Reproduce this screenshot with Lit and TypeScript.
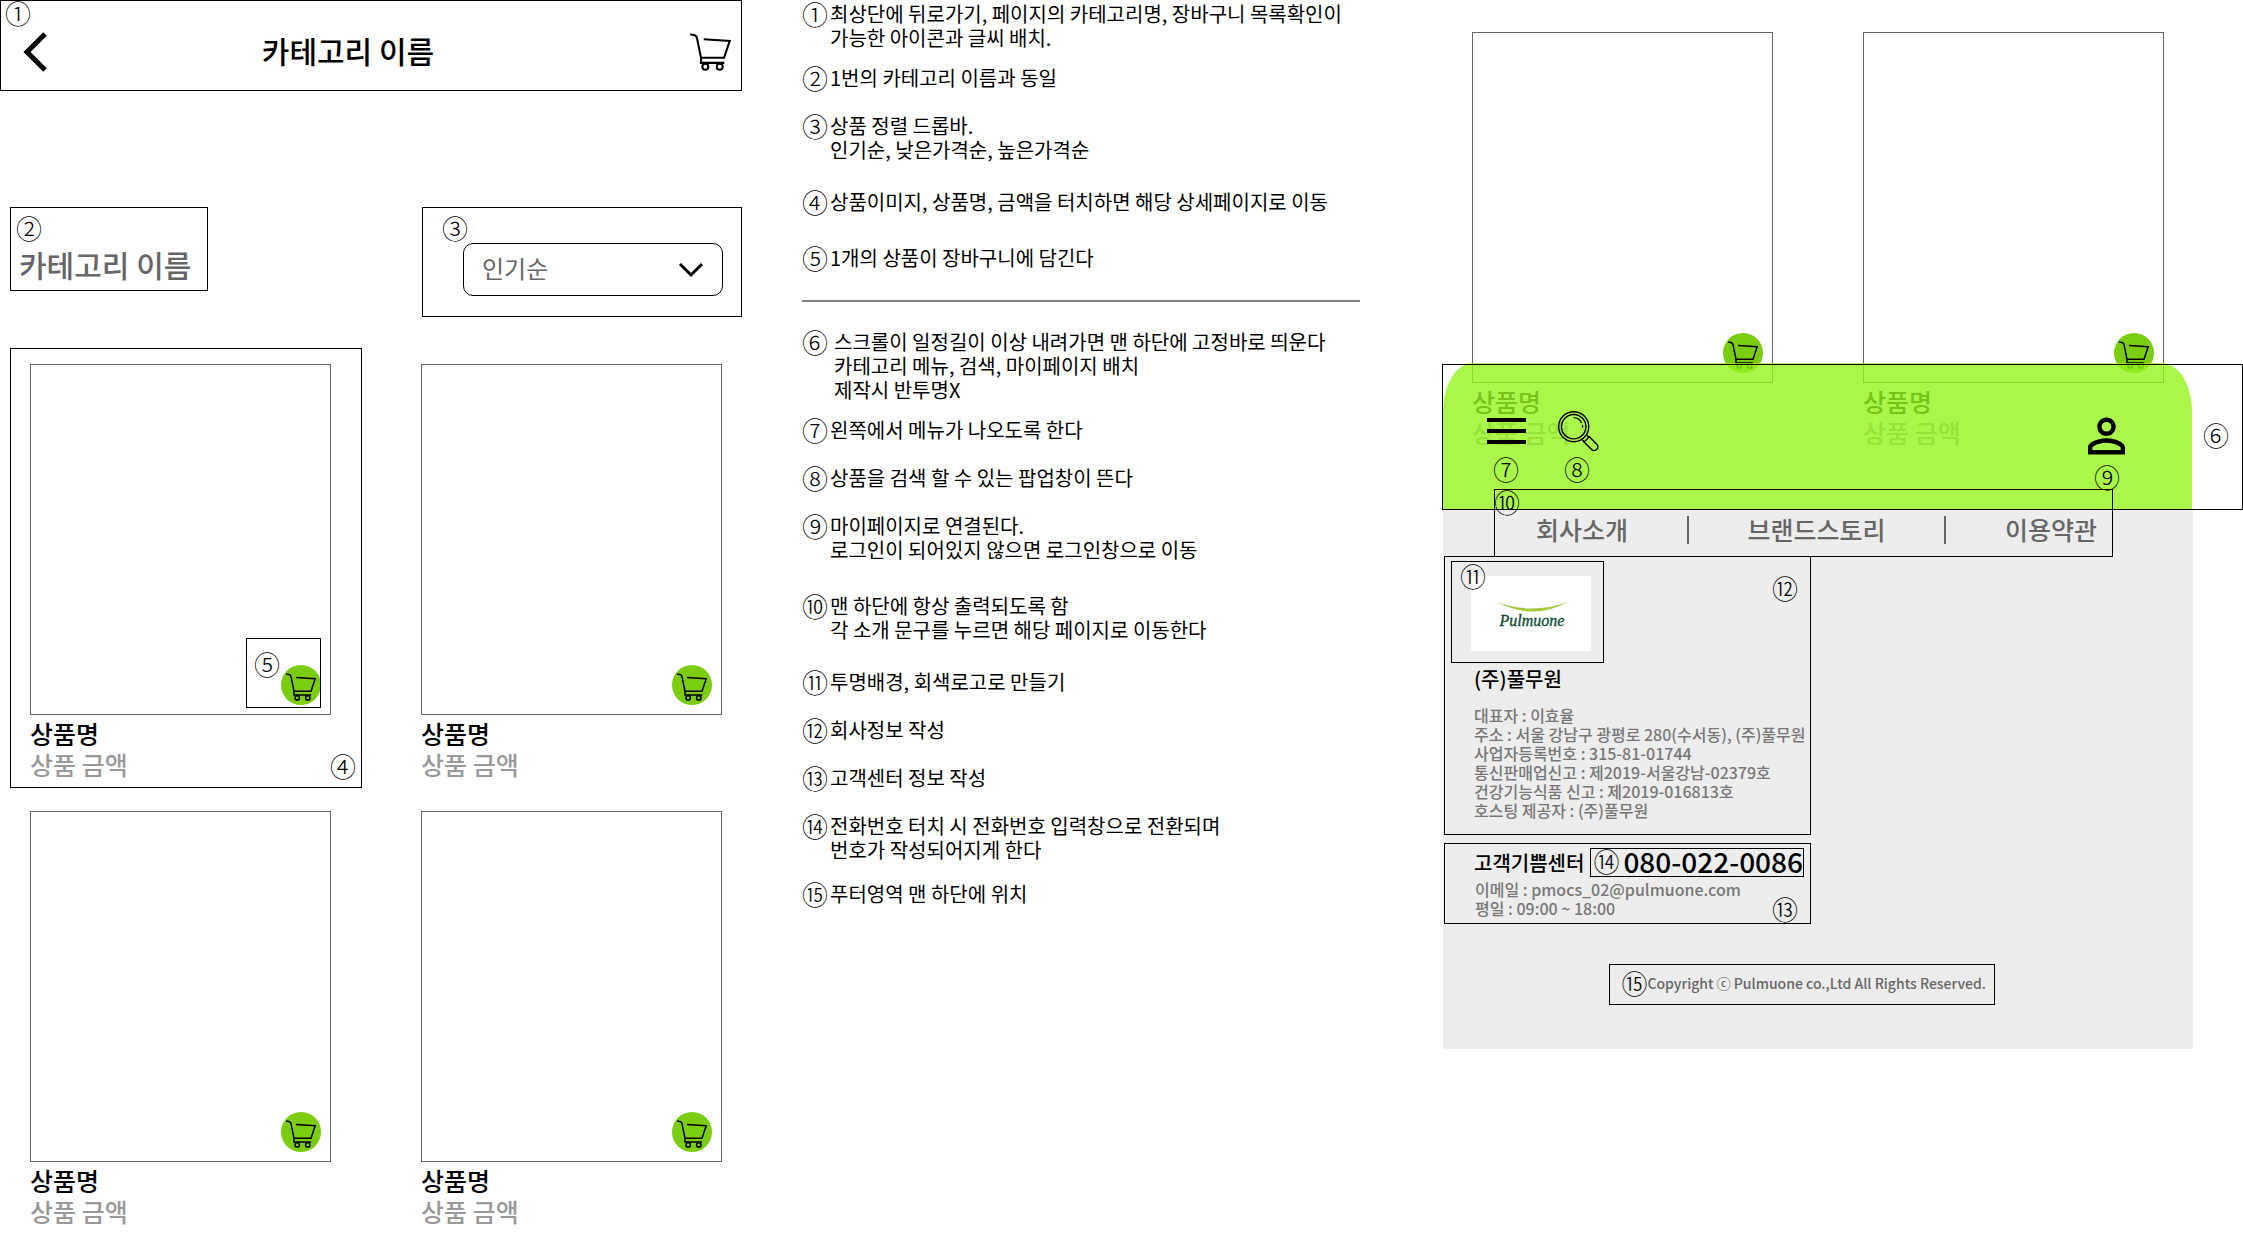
import { LitElement, html, css, nothing } from "lit";
import { customElement, property, state } from "lit/decorators.js";

const base = css`
  *,
  *::before,
  *::after {
    box-sizing: border-box;
  }
  a {
    color: inherit;
    text-decoration: none;
  }
  button {
    padding: 0;
    border: 0;
    background: none;
    color: inherit;
    font: inherit;
    cursor: pointer;
  }
  svg {
    display: block;
  }
  .mark {
    font-size: 26px;
    line-height: 24px;
    font-weight: 300;
    color: #000;
  }
  .pin {
    position: absolute;
    z-index: 3;
  }
`;

const cartIcon = (cls: string) => html`
  <svg class=${cls} viewBox="0 0 30 28" fill="none" stroke="#000" stroke-width="1.5" aria-hidden="true">
    <path d="M0 .9 L3.8 1.8 Q5 2.6 5.2 4.6 L8 18.2 H25 L29.2 5.8 L10 4.6" />
    <path d="M8 18 V22 H25.2" />
    <circle cx="11.2" cy="24.9" r="2.2" />
    <circle cx="21.8" cy="24.9" r="2.2" />
  </svg>
`;

interface Note {
  mark: string;
  lines: string[];
  gap: string;
}

const notesTop: Note[] = [
  { mark: "①", lines: ["최상단에 뒤로가기, 페이지의 카테고리명, 장바구니 목록확인이", "가능한 아이콘과 글씨 배치."], gap: "g16" },
  { mark: "②", lines: ["1번의 카테고리 이름과 동일"], gap: "g24" },
  { mark: "③", lines: ["상품 정렬 드롭바.", "인기순, 낮은가격순, 높은가격순"], gap: "g28" },
  { mark: "④", lines: ["상품이미지, 상품명, 금액을 터치하면 해당 상세페이지로 이동"], gap: "g32" },
  { mark: "⑤", lines: ["1개의 상품이 장바구니에 담긴다"], gap: "" },
];

const notesBottom: Note[] = [
  {
    mark: "⑥",
    lines: ["스크롤이 일정길이 이상 내려가면 맨 하단에 고정바로 띄운다", "카테고리 메뉴, 검색, 마이페이지 배치", "제작시 반투명X"],
    gap: "g16 wide",
  },
  { mark: "⑦", lines: ["왼쪽에서 메뉴가 나오도록 한다"], gap: "g24" },
  { mark: "⑧", lines: ["상품을 검색 할 수 있는 팝업창이 뜬다"], gap: "g24" },
  { mark: "⑨", lines: ["마이페이지로 연결된다.", "로그인이 되어있지 않으면 로그인창으로 이동"], gap: "g32" },
  { mark: "⑩", lines: ["맨 하단에 항상 출력되도록 함", "각 소개 문구를 누르면 해당 페이지로 이동한다"], gap: "g28" },
  { mark: "⑪", lines: ["투명배경, 회색로고로 만들기"], gap: "g24" },
  { mark: "⑫", lines: ["회사정보 작성"], gap: "g24" },
  { mark: "⑬", lines: ["고객센터 정보 작성"], gap: "g24" },
  { mark: "⑭", lines: ["전화번호 터치 시 전화번호 입력창으로 전환되며", "번호가 작성되어지게 한다"], gap: "g20" },
  { mark: "⑮", lines: ["푸터영역 맨 하단에 위치"], gap: "" },
];

@customElement("product-card")
export class ProductCard extends LitElement {
  @property({ type: Boolean }) annotated = false;

  static styles = [
    base,
    css`
      :host {
        display: block;
        position: relative;
      }
      .photo {
        position: relative;
        aspect-ratio: 301 / 351;
        border: 1px solid #666;
      }
      .photo-link {
        display: block;
        height: 100%;
      }
      .add {
        position: absolute;
        right: 9px;
        bottom: 9px;
        width: 40px;
        height: 40px;
        border-radius: 50%;
        background: #7bcd12;
        padding: 8px 5px;
      }
      .cart {
        width: 30px;
        height: 28px;
      }
      .text {
        display: block;
        padding-top: 3px;
        font-size: 25px;
        line-height: 31px;
        font-weight: 500;
      }
      .name {
        display: block;
      }
      .price {
        display: block;
        color: #999;
      }
      .frame {
        position: absolute;
        border: 1px solid #000;
        pointer-events: none;
      }
      .frame-card {
        inset: -16px -31px -8px -20px;
      }
      .frame-add {
        right: 9px;
        bottom: 6px;
        width: 75px;
        height: 70px;
      }
      .pin-card {
        right: 5px;
        bottom: 9px;
      }
      .pin-add {
        left: 7px;
        top: 13px;
      }
    `,
  ];

  render() {
    return html`
      <div class="photo">
        <a class="photo-link" href="#product" aria-label="상품명"></a>
        <button class="add" type="button" aria-label="장바구니">${cartIcon("cart")}</button>
        ${this.annotated ? html`<div class="frame frame-add"><span class="mark pin pin-add">⑤</span></div>` : nothing}
      </div>
      <a class="text" href="#product">
        <span class="name">상품명</span>
        <span class="price">상품 금액</span>
      </a>
      ${this.annotated ? html`<div class="frame frame-card"><span class="mark pin pin-card">④</span></div>` : nothing}
    `;
  }
}

@customElement("category-screen")
export class CategoryScreen extends LitElement {
  @state() private sort = "인기순";

  static styles = [
    base,
    css`
      :host {
        display: block;
      }
      .top {
        position: relative;
        display: grid;
        grid-template-columns: 1fr auto 1fr;
        align-items: center;
        height: 91px;
        padding: 12px 10px 0 22px;
        border: 1px solid #000;
      }
      .pin-top {
        left: 4px;
        top: 0;
      }
      .back {
        width: 24px;
        height: 40px;
      }
      .title {
        margin: 0 58px 4px 0;
        font-size: 30px;
        line-height: 40px;
        font-weight: 500;
      }
      .basket {
        justify-self: end;
      }
      .cart {
        width: 41px;
        height: 38px;
      }
      .tools {
        display: flex;
        align-items: flex-start;
        justify-content: space-between;
        padding: 116px 0 0 10px;
      }
      .label {
        position: relative;
        height: 84px;
        margin: 0;
        padding: 36px 16px 0 8px;
        border: 1px solid #000;
        font-size: 30px;
        line-height: 40px;
        font-weight: 500;
        color: #666;
      }
      .pin-label {
        left: 5px;
        top: 8px;
      }
      .sorter {
        position: relative;
        width: 320px;
        padding: 35px 18px 20px 40px;
        border: 1px solid #000;
      }
      .pin-sort {
        left: 19px;
        top: 8px;
      }
      .pick {
        position: relative;
        display: block;
      }
      select {
        appearance: none;
        display: block;
        width: 100%;
        height: 53px;
        padding: 0 50px 4px 18px;
        border: 1px solid #000;
        border-radius: 10px;
        background: #fff;
        font: inherit;
        font-size: 24px;
        color: #666;
      }
      .arrow {
        position: absolute;
        right: 19px;
        top: 18px;
        width: 26px;
        height: 18px;
        pointer-events: none;
      }
      .products {
        display: grid;
        grid-template-columns: 1fr 1fr;
        gap: 31px 90px;
        padding: 47px 20px 0 30px;
      }
    `,
  ];

  render() {
    return html`
      <header class="top">
        <span class="mark pin pin-top">①</span>
        <button class="back" type="button" aria-label="뒤로가기">
          <svg class="back" viewBox="0 0 24 40" fill="none" stroke="#000" stroke-width="5" aria-hidden="true">
            <path d="M22 2 L4 20 L22 38" />
          </svg>
        </button>
        <h1 class="title">카테고리 이름</h1>
        <button class="basket" type="button" aria-label="장바구니">${cartIcon("cart")}</button>
      </header>
      <div class="tools">
        <h2 class="label"><span class="mark pin pin-label">②</span>카테고리 이름</h2>
        <div class="sorter">
          <span class="mark pin pin-sort">③</span>
          <label class="pick">
            <select
              aria-label="상품 정렬"
              .value=${this.sort}
              @change=${(e: Event) => (this.sort = (e.target as HTMLSelectElement).value)}
            >
              <option>인기순</option>
              <option>낮은가격순</option>
              <option>높은가격순</option>
            </select>
            <svg class="arrow" viewBox="0 0 26 18" fill="none" stroke="#000" stroke-width="3" aria-hidden="true">
              <path d="M2 3 L13 14 L24 3" />
            </svg>
          </label>
        </div>
      </div>
      <div class="products">
        <product-card annotated></product-card>
        <product-card></product-card>
        <product-card></product-card>
        <product-card></product-card>
      </div>
    `;
  }
}

@customElement("note-list")
export class NoteList extends LitElement {
  static styles = [
    base,
    css`
      :host {
        display: block;
        padding-top: 2px;
        font-size: 20px;
        line-height: 24px;
      }
      ul {
        margin: 0;
        padding: 0;
        list-style: none;
      }
      li {
        display: flex;
      }
      .mark {
        width: 28px;
        flex: none;
        height: 24px;
      }
      p {
        margin: 0;
      }
      .line {
        display: block;
        white-space: nowrap;
      }
      .wide p {
        padding-left: 4px;
      }
      .g16 {
        margin-bottom: 16px;
      }
      .g20 {
        margin-bottom: 20px;
      }
      .g24 {
        margin-bottom: 24px;
      }
      .g28 {
        margin-bottom: 28px;
      }
      .g32 {
        margin-bottom: 32px;
      }
      hr {
        height: 2px;
        margin: 30px 0 28px;
        border: 0;
        background: #808080;
      }
    `,
  ];

  private list(notes: Note[]) {
    return html`
      <ul>
        ${notes.map(
          (n) => html`
            <li class=${n.gap}>
              <span class="mark">${n.mark}</span>
              <p>${n.lines.map((l) => html`<span class="line">${l}</span>`)}</p>
            </li>
          `,
        )}
      </ul>
    `;
  }

  render() {
    return html`${this.list(notesTop)}
      <hr />
      ${this.list(notesBottom)}`;
  }
}

@customElement("footer-screen")
export class FooterScreen extends LitElement {
  static styles = [
    base,
    css`
      :host {
        display: block;
      }
      .list {
        position: relative;
        padding: 32px 79px 62px 30px;
      }
      .products {
        display: grid;
        grid-template-columns: 1fr 1fr;
        gap: 90px;
      }
      .bar {
        position: absolute;
        left: 1px;
        right: 51px;
        bottom: 0;
        z-index: 1;
        display: flex;
        align-items: flex-start;
        height: 147px;
        padding: 48px 67px 0 44px;
        border-radius: 30px 30px 0 0 / 48px 48px 0 0;
        background: rgba(149, 244, 30, 0.8);
      }
      .tool {
        position: relative;
      }
      .menu {
        width: 39px;
        height: 40px;
      }
      .search {
        width: 41px;
        height: 41px;
      }
      .user {
        width: 37px;
        height: 40px;
      }
      .tool-search {
        margin-left: 32px;
      }
      .tool-user {
        margin: 5px 0 0 auto;
      }
      .pin-tool {
        left: 6px;
        top: 46px;
      }
      .tool-user .pin-tool {
        top: 49px;
      }
      .frame {
        position: absolute;
        z-index: 2;
        border: 1px solid #000;
        pointer-events: none;
      }
      .frame-bar {
        inset: auto 0 0 0;
        height: 146px;
      }
      .pin-bar {
        right: 13px;
        top: 58px;
      }
      footer {
        position: relative;
        margin: 0 50px 0 1px;
        padding: 0 0 44px 1px;
        background: #ededed;
      }
      nav {
        display: flex;
        align-items: center;
        justify-content: space-between;
        height: 46px;
        padding: 0 96px 8px 92px;
        font-size: 25px;
        line-height: 36px;
        font-weight: 500;
        color: #666;
      }
      .rule {
        width: 2px;
        height: 28px;
        margin-top: 2px;
        background: #666;
      }
      .frame-nav {
        left: 51px;
        right: 80px;
        top: -21px;
        height: 68px;
      }
      .pin-nav {
        left: -1px;
        top: 0;
      }
      .card {
        position: relative;
        width: 367px;
        border: 1px solid #000;
      }
      .company {
        padding: 4px 0 14px 6px;
      }
      .logo-box {
        position: relative;
        width: 153px;
        height: 102px;
        padding: 14px 0 0 19px;
        border: 1px solid #000;
      }
      .logo {
        width: 120px;
        height: 75px;
        background: #fff;
      }
      .pin-logo {
        left: 8px;
        top: 2px;
      }
      .pin-company {
        right: 12px;
        top: 19px;
      }
      .pin-center {
        right: 12px;
        bottom: 2px;
      }
      h3 {
        margin: 0;
        font-size: 20px;
        line-height: 28px;
        font-weight: 500;
      }
      .info {
        padding-left: 23px;
        font-size: 16px;
        line-height: 19px;
        font-weight: 500;
        color: #777;
      }
      .info p {
        margin: 0;
        white-space: nowrap;
      }
      .company h3 {
        padding: 2px 0 13px 23px;
      }
      .center {
        margin-top: 8px;
        padding: 4px 6px 5px 29px;
      }
      .center .info {
        padding: 3px 0 0 1px;
      }
      .call {
        display: flex;
        align-items: center;
        justify-content: space-between;
      }
      .phone {
        display: flex;
        align-items: center;
        height: 29px;
        padding: 0 0 4px 2px;
        border: 1px solid #000;
        font-size: 28px;
        line-height: 24px;
        font-weight: 500;
      }
      .phone .mark {
        width: 30px;
      }
      .copy {
        display: flex;
        align-items: center;
        width: max-content;
        height: 41px;
        margin: 40px 198px 0 auto;
        padding: 0 8px 3px 11px;
        border: 1px solid #000;
        font-size: 14px;
        line-height: 20px;
        font-weight: 500;
        color: #666;
      }
    `,
  ];

  render() {
    return html`
      <section class="list">
        <div class="products">
          <product-card></product-card>
          <product-card></product-card>
        </div>
        <div class="bar">
          <button class="tool" type="button" aria-label="메뉴">
            <svg class="menu" viewBox="0 0 39 40" stroke="#000" stroke-width="4" aria-hidden="true">
              <path d="M0 9 H39 M0 20 H39 M0 31 H39" />
            </svg>
            <span class="mark pin pin-tool">⑦</span>
          </button>
          <button class="tool tool-search" type="button" aria-label="검색">
            <svg class="search" viewBox="0 0 41 41" fill="none" stroke="#000" stroke-width="1.4" aria-hidden="true">
              <circle cx="15.7" cy="15.7" r="15" />
              <circle cx="15.7" cy="15.7" r="12.2" />
              <path d="M15.5 6.6 a9.2 9.2 0 0 1 8.2 5.4 M24.4 14 a9 9 0 0 1 .2 2.6" />
              <path d="M28.6 24 L31 26.3 M24 28.6 L26.4 31" />
              <path d="M31.4 25.8 L39 33.6 a3 3 0 0 1 0 4.3 l-.8 .8 a3 3 0 0 1 -4.3 0 L26 31 Z" />
            </svg>
            <span class="mark pin pin-tool">⑧</span>
          </button>
          <button class="tool tool-user" type="button" aria-label="마이페이지">
            <svg class="user" viewBox="4 4 16 16" fill="#000" aria-hidden="true">
              <path
                d="M12 5.9a2.1 2.1 0 1 1 0 4.2 2.1 2.1 0 0 1 0-4.2m0 9c2.97 0 6.1 1.46 6.1 2.1v1.1H5.9V17c0-.64 3.13-2.1 6.1-2.1M12 4C9.79 4 8 5.79 8 8s1.79 4 4 4 4-1.79 4-4-1.79-4-4-4zm0 9c-2.67 0-8 1.34-8 4v3h16v-3c0-2.66-5.33-4-8-4z"
              />
            </svg>
            <span class="mark pin pin-tool">⑨</span>
          </button>
        </div>
        <div class="frame frame-bar"><span class="mark pin pin-bar">⑥</span></div>
      </section>
      <footer>
        <div class="frame frame-nav"><span class="mark pin pin-nav">⑩</span></div>
        <nav>
          <a href="#about">회사소개</a>
          <span class="rule"></span>
          <a href="#brand">브랜드스토리</a>
          <span class="rule"></span>
          <a href="#terms">이용약관</a>
        </nav>
        <section class="card company">
          <span class="mark pin pin-company">⑫</span>
          <div class="logo-box">
            <span class="mark pin pin-logo">⑪</span>
            <svg class="logo" viewBox="0 0 120 75" role="img" aria-label="Pulmuone">
              <path d="M26 26 Q61 39 97 26 Q62 45 26 26 Z" fill="#a5c93d" />
              <text
                x="61"
                y="50"
                text-anchor="middle"
                font-family="Liberation Serif, serif"
                font-style="italic"
                font-weight="400"
                font-size="16"
                fill="#0b4a33"
                stroke="#0b4a33"
                stroke-width="0.3"
              >
                Pulmuone
              </text>
            </svg>
          </div>
          <h3>(주)풀무원</h3>
          <div class="info">
            <p>대표자 : 이효율</p>
            <p>주소 : 서울 강남구 광평로 280(수서동), (주)풀무원</p>
            <p>사업자등록번호 : 315-81-01744</p>
            <p>통신판매업신고 : 제2019-서울강남-02379호</p>
            <p>건강기능식품 신고 : 제2019-016813호</p>
            <p>호스팅 제공자 : (주)풀무원</p>
          </div>
        </section>
        <section class="card center">
          <span class="mark pin pin-center">⑬</span>
          <div class="call">
            <h3>고객기쁨센터</h3>
            <a class="phone" href="tel:080-022-0086"><span class="mark">⑭</span>080-022-0086</a>
          </div>
          <div class="info">
            <p>이메일 : pmocs_02@pulmuone.com</p>
            <p>평일 : 09:00 ~ 18:00</p>
          </div>
        </section>
        <div class="copy"><span class="mark">⑮</span>Copyright ⓒ Pulmuone co.,Ltd All Rights Reserved.</div>
      </footer>
    `;
  }
}

@customElement("app-root")
export class AppRoot extends LitElement {
  static styles = css`
    :host {
      display: block;
      min-height: 100vh;
      background: #fff;
      color: #000;
      font-family: "Noto Sans CJK KR", sans-serif;
    }
    .board {
      display: grid;
      grid-template-columns: 742fr 558fr 823fr;
      column-gap: 60px;
      align-items: start;
    }
    .board footer-screen {
      margin-left: 22px;
    }
  `;

  render() {
    return html`
      <main class="board">
        <category-screen></category-screen>
        <note-list></note-list>
        <footer-screen></footer-screen>
      </main>
    `;
  }
}
